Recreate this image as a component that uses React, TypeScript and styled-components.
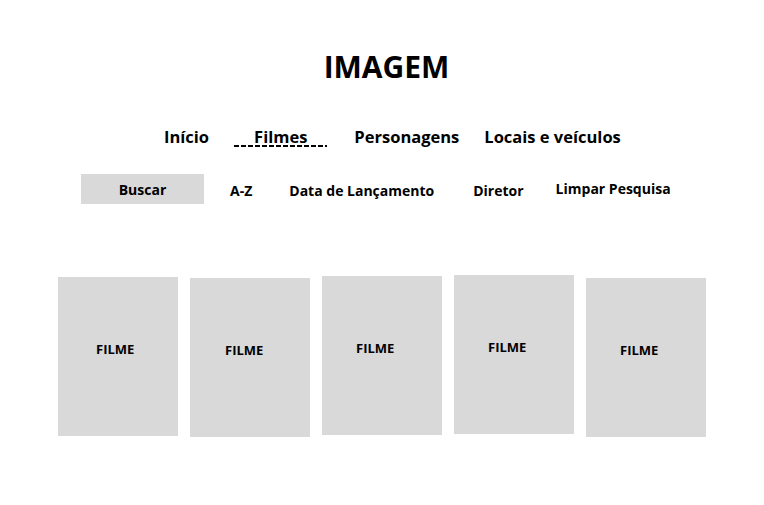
import React from "react";
import styled, { createGlobalStyle } from "styled-components";

const Global = createGlobalStyle`
  html, body {
    margin: 0;
    padding: 0;
    background: #ffffff;
  }
  body {
    font-family: "Open Sans", "DejaVu Sans", sans-serif;
    color: #000000;
  }
`;

const Page = styled.div`
  width: 764px;
  min-height: 505px;
  padding-top: 46px;
  box-sizing: border-box;
`;

const Title = styled.h1`
  margin: 0;
  padding-left: 9px;
  text-align: center;
  font-size: 30px;
  font-weight: 700;
  line-height: normal;
  letter-spacing: 0;
`;

const Nav = styled.nav`
  display: flex;
  align-items: flex-start;
  margin-top: 38px;
  padding-left: 164px;
  gap: 25px;
`;

const NavItem = styled.a<{ $active?: boolean }>`
  font-size: 16.5px;
  font-weight: 700;
  line-height: 23px;
  color: #000000;
  text-decoration: none;
  padding: ${(p) => (p.$active ? "0 20px" : "0")};
  margin-right: ${(p) => (p.$active ? "2px" : "0")};
  background-image: ${(p) =>
    p.$active
      ? "repeating-linear-gradient(90deg, #000 0 5px, transparent 5px 7px)"
      : "none"};
  background-repeat: no-repeat;
  background-size: 100% 2px;
  background-position: 0 calc(100% - 1px);
`;

const Toolbar = styled.div`
  display: flex;
  align-items: center;
  margin-top: 26px;
  padding-left: 81px;
  height: 30px;
`;

const SearchButton = styled.button`
  width: 123px;
  height: 30px;
  border: none;
  background: #d9d9d9;
  font-family: "Open Sans", "DejaVu Sans", sans-serif;
  font-size: 14px;
  font-weight: 700;
  color: #000000;
  padding: 0;
  line-height: normal;
`;

const Filter = styled.span<{ $ml: number; $dy?: number }>`
  margin-left: ${(p) => p.$ml}px;
  margin-top: ${(p) => (p.$dy ?? 2)}px;
  font-size: 14px;
  font-weight: 700;
  line-height: normal;
  white-space: nowrap;
`;

const Cards = styled.div`
  display: flex;
  align-items: flex-start;
  gap: 12px;
  margin-top: 71px;
  padding-left: 58px;
`;

const Card = styled.div<{ $top: number; $inset: number }>`
  width: 120px;
  height: 159px;
  margin-top: ${(p) => p.$top}px;
  background: #d9d9d9;
  box-sizing: border-box;
  padding-top: 60px;
  padding-left: ${(p) => p.$inset}px;
`;

const CardLabel = styled.span`
  font-size: 13px;
  font-weight: 700;
  line-height: normal;
`;

const cards = [
  { top: 2, inset: 38 },
  { top: 3, inset: 35 },
  { top: 1, inset: 34 },
  { top: 0, inset: 34 },
  { top: 3, inset: 34 },
];

export default function App() {
  return (
    <>
      <Global />
      <Page>
        <Title>IMAGEM</Title>
        <Nav>
          <NavItem>Início</NavItem>
          <NavItem $active>Filmes</NavItem>
          <NavItem>Personagens</NavItem>
          <NavItem>Locais e veículos</NavItem>
        </Nav>
        <Toolbar>
          <SearchButton>Buscar</SearchButton>
          <Filter $ml={26}>A-Z</Filter>
          <Filter $ml={37}>Data de Lançamento</Filter>
          <Filter $ml={39}>Diretor</Filter>
          <Filter $ml={32} $dy={-1}>Limpar Pesquisa</Filter>
        </Toolbar>
        <Cards>
          {cards.map((c, i) => (
            <Card key={i} $top={c.top} $inset={c.inset}>
              <CardLabel>FILME</CardLabel>
            </Card>
          ))}
        </Cards>
      </Page>
    </>
  );
}
